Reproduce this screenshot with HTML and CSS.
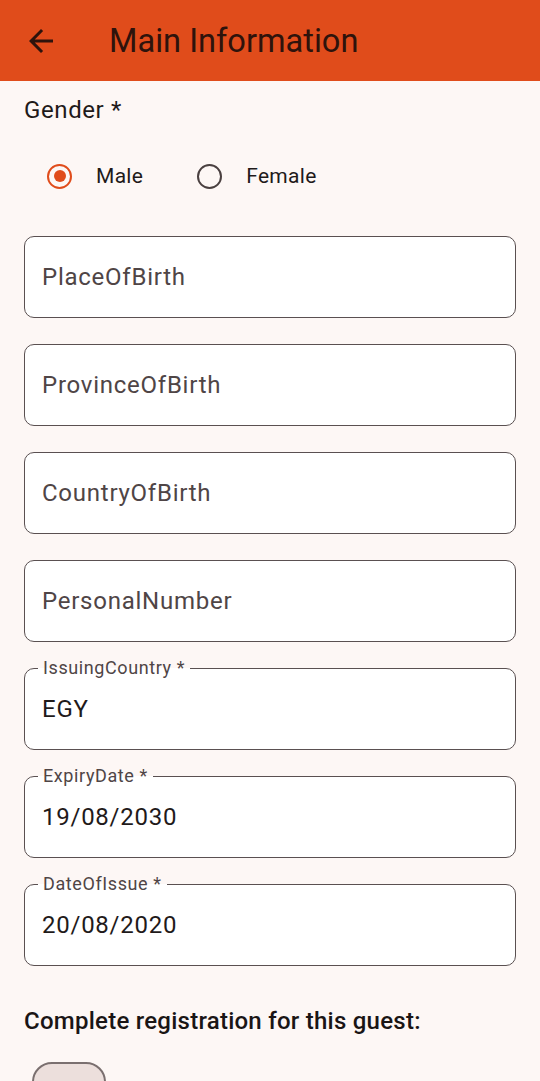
FILE: index.html
```html
<!DOCTYPE html>
<html lang="en">
<head>
<meta charset="utf-8">
<title>Main Information</title>
<link rel="stylesheet" href="styles.css">
</head>
<body>
<header class="appbar">
  <span class="back">
    <svg width="36" height="36" viewBox="0 0 24 24"><path d="M20 11H7.83l5.59-5.59L12 4l-8 8 8 8 1.41-1.41L7.83 13H20v-2z" fill="currentColor"/></svg>
  </span>
  <h1 class="title">Main Information</h1>
</header>
<main class="content">
  <div class="gender-label">Gender *</div>
  <div class="radios">
    <label class="radio"><span class="ring on"><span class="dot"></span></span><span class="rtext">Male</span></label>
    <label class="radio"><span class="ring"></span><span class="rtext">Female</span></label>
  </div>
  <div class="fields">
    <div class="field"><span class="placeholder">PlaceOfBirth</span></div>
    <div class="field"><span class="placeholder">ProvinceOfBirth</span></div>
    <div class="field"><span class="placeholder">CountryOfBirth</span></div>
    <div class="field"><span class="placeholder">PersonalNumber</span></div>
    <div class="field filled"><span class="flabel">IssuingCountry *</span><span class="value">EGY</span></div>
    <div class="field filled"><span class="flabel">ExpiryDate *</span><span class="value">19/08/2030</span></div>
    <div class="field filled"><span class="flabel">DateOfIssue *</span><span class="value">20/08/2020</span></div>
  </div>
  <div class="complete">Complete registration for this guest:</div>
  <div class="switch"></div>
</main>
</body>
</html>
```
FILE: styles.css
```css
html, body {
  margin: 0;
  padding: 0;
}
body {
  width: 540px;
  height: 1081px;
  overflow: hidden;
  background: #fdf7f5;
  font-family: Roboto, "Noto Sans", sans-serif;
  color: #1f1a1a;
}
.appbar {
  height: 81px;
  background: #e04c1b;
  display: flex;
  align-items: center;
  color: #2e130c;
}
.back {
  width: 36px;
  height: 36px;
  margin-left: 23px;
  display: flex;
}
.title {
  margin: 0 0 0 50px;
  font-size: 32.6px;
  font-weight: 400;
  letter-spacing: 0;
  color: #2e130c;
}
.content {
  padding: 0 24px;
}
.gender-label {
  margin-top: 14px;
  font-size: 24px;
  line-height: 30px;
  letter-spacing: 0.6px;
  color: #1f1a1a;
}
.radios {
  display: flex;
  align-items: center;
  height: 40px;
  margin-top: 31px;
  padding-left: 23px;
}
.radio {
  display: flex;
  align-items: center;
  margin-right: 53px;
}
.radio + .radio {
  margin-left: 1px;
}
.ring {
  width: 21px;
  height: 21px;
  border: 2.5px solid #4a4040;
  border-radius: 50%;
  display: flex;
  align-items: center;
  justify-content: center;
}
.ring.on {
  border-color: #e04c1b;
}
.dot {
  width: 12px;
  height: 12px;
  background: #e04c1b;
  border-radius: 50%;
}
.rtext {
  font-size: 21px;
  letter-spacing: 0.3px;
  margin-left: 24px;
  color: #1f1a1a;
}
.fields {
  margin-top: 40px;
  display: flex;
  flex-direction: column;
  gap: 26px;
}
.field {
  position: relative;
  height: 82px;
  box-sizing: border-box;
  border: 1.5px solid #5a5051;
  border-radius: 10px;
  background: #ffffff;
  display: flex;
  align-items: center;
  padding-left: 17px;
}
.placeholder {
  font-size: 24px;
  color: #4f4546;
  letter-spacing: 0.75px;
}
.value {
  font-size: 24px;
  color: #1f1a1a;
  letter-spacing: 0.75px;
}
.flabel {
  position: absolute;
  top: -12px;
  left: 13px;
  padding: 0 5px;
  font-size: 18px;
  line-height: 22px;
  color: #4f4546;
  background: linear-gradient(to bottom, #fdf7f5 0 11px, #ffffff 11px);
  letter-spacing: 0.6px;
}
.complete {
  margin-top: 40px;
  font-size: 24px;
  font-weight: 500;
  line-height: 30px;
  letter-spacing: 0.25px;
  color: #1a1515;
}
.switch {
  margin-top: 26px;
  margin-left: 8px;
  width: 74px;
  height: 40px;
  box-sizing: border-box;
  border: 2.5px solid #7a6f6f;
  border-radius: 20px;
  background: #ecdfdc;
}
```
